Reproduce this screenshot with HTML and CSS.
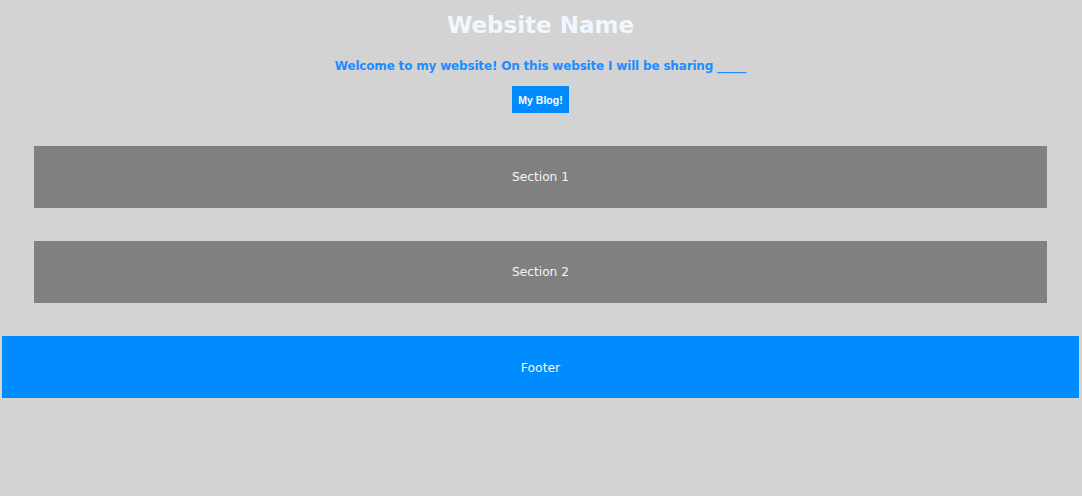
FILE: index.html
```html
<!DOCTYPE html>
<html>
<head>
<meta charset="utf-8">
<link rel="stylesheet" href="styles.css">
</head>
<body>
<header class="header">
  <h1 class="title">Website Name</h1>
  <p class="intro">Welcome to my website! On this website I will be sharing _____</p>
  <button class="blog-btn">My Blog!</button>
</header>
<main class="sections">
  <section class="section">Section 1</section>
  <section class="section">Section 2</section>
</main>
<footer class="footer">Footer</footer>
</body>
</html>
```
FILE: styles.css
```css
html, body {
  margin: 0;
  padding: 0;
  background: #d3d3d3;
  font-family: "DejaVu Sans", Verdana, sans-serif;
}
body {
  padding: 0 3px 0 2px;
}
.header {
  display: flex;
  flex-direction: column;
  align-items: center;
  padding-top: 9px;
}
.title {
  margin: 0;
  font-size: 23px;
  line-height: 32px;
  color: #f0f8ff;
  font-weight: bold;
}
.intro {
  margin: 17px 0 0;
  font-size: 12px;
  line-height: 16px;
  letter-spacing: -0.18px;
  color: #1e8cff;
  font-weight: bold;
}
.blog-btn {
  margin-top: 12px;
  width: 57px;
  height: 27px;
  padding: 0;
  border: none;
  background: #008cff;
  color: #fff;
  font-family: "Liberation Sans", Arial, sans-serif;
  font-weight: bold;
  font-size: 10.5px;
}
.sections {
  display: flex;
  flex-direction: column;
  gap: 33px;
  padding: 33px 32px 0 32px;
}
.section {
  height: 62px;
  background: #808080;
  color: #f5f5f5;
  font-size: 12.2px;
  display: flex;
  align-items: center;
  justify-content: center;
}
.footer {
  margin-top: 33px;
  height: 62px;
  background: #008cff;
  color: #f5f5f5;
  font-size: 12.4px;
  display: flex;
  align-items: center;
  justify-content: center;
}
```
